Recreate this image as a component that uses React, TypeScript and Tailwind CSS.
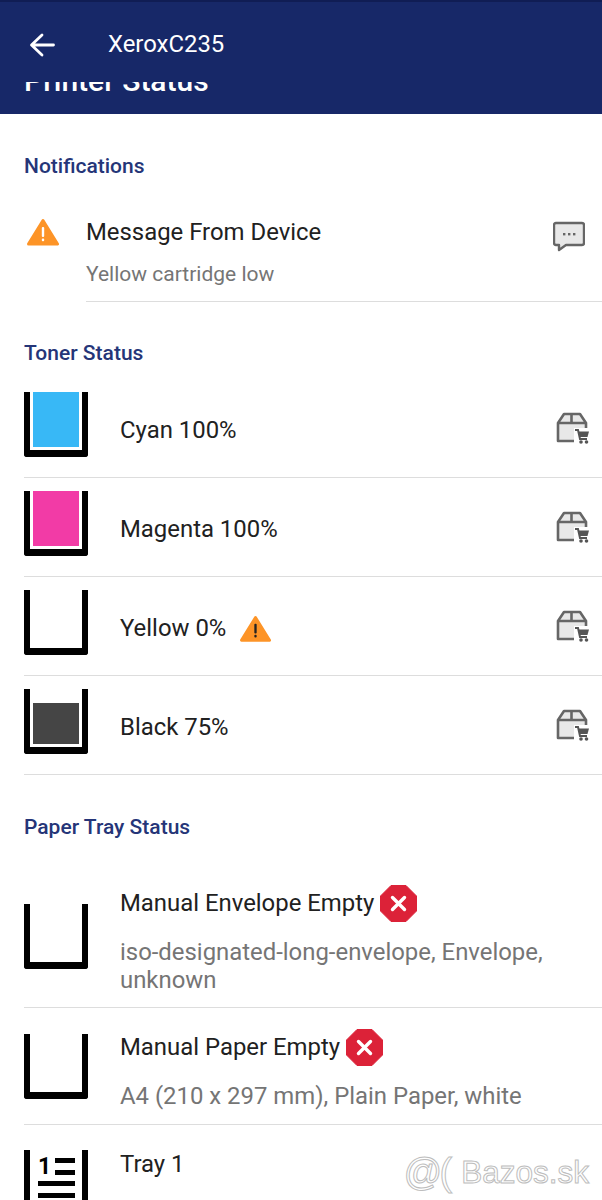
import React from 'react'

const font = { fontFamily: 'Roboto, sans-serif' }

function BackArrow() {
  return (
    <svg width="26" height="24" viewBox="0 0 26 24" className="shrink-0">
      <path d="M24.5 12 H3 M13 2 L2.5 12 L13 22" stroke="#fff" strokeWidth="2.8" fill="none" strokeLinecap="round" strokeLinejoin="round" />
    </svg>
  )
}

function WarnIcon({ size = 32, dark = false }: { size?: number; dark?: boolean }) {
  return (
    <svg width={size} height={size * 0.875} viewBox="0 0 32 28" className="shrink-0">
      <path d="M16 2.5 L30.5 26 H1.5 Z" fill="#fd9427" stroke="#fd9427" strokeWidth="3" strokeLinejoin="round" />
      <rect x="14.8" y="9" width="2.4" height="10" rx="1" fill={dark ? '#222' : '#fff'} />
      <rect x="14.8" y="20.5" width="2.4" height="2.8" rx="1" fill={dark ? '#222' : '#fff'} />
    </svg>
  )
}

function StopIcon() {
  return (
    <svg width="37" height="37" viewBox="0 0 37 37" className="shrink-0">
      <path d="M11 0.5 H26 L36.5 11 V26 L26 36.5 H11 L0.5 26 V11 Z" fill="#dc2238" stroke="#dc2238" strokeLinejoin="round" />
      <path d="M12.5 12.5 L24.5 24.5 M24.5 12.5 L12.5 24.5" stroke="#fff" strokeWidth="3.4" strokeLinecap="round" />
    </svg>
  )
}

function ChatIcon() {
  return (
    <svg width="32" height="32" viewBox="0 0 32 32">
      <path d="M3 2 H29 Q31 2 31 4 V22 Q31 24 29 24 H13 L6 29 V24 H3 Q1 24 1 22 V4 Q1 2 3 2 Z" fill="#e8e8e8" stroke="#666" strokeWidth="2.4" strokeLinejoin="round" />
      <rect x="10" y="12" width="2.4" height="2.4" fill="#666" />
      <rect x="15" y="12" width="2.4" height="2.4" fill="#666" />
      <rect x="20" y="12" width="2.4" height="2.4" fill="#666" />
    </svg>
  )
}

function BoxCartIcon() {
  return (
    <svg width="34" height="32" viewBox="0 0 34 32">
      <path d="M2 11 L8 2 H24 L30 11 V29 H2 Z" fill="#e8e8e8" stroke="#666" strokeWidth="2.6" strokeLinejoin="round" />
      <path d="M2 11 H30 M15.5 2 V11" stroke="#666" strokeWidth="2.6" fill="none" />
      <rect x="18" y="16" width="16" height="16" fill="#fff" />
      <path d="M19 18 H22 L24 27 H31" stroke="#555" strokeWidth="2" fill="none" />
      <path d="M22.5 19.5 H33 L31.5 25 H23.5 Z" fill="#555" />
      <circle cx="25" cy="30" r="1.8" fill="#555" />
      <circle cx="30.5" cy="30" r="1.8" fill="#555" />
    </svg>
  )
}

function Bin({ fill, inset }: { fill?: string; inset?: number }) {
  return (
    <div className="relative h-[65px] w-[64px] shrink-0 rounded-b-[3px] border-x-[6px] border-b-[7px] border-black">
      {fill && (
        <div
          className="absolute bottom-[3px] left-[3px] right-[3px]"
          style={{ backgroundColor: fill, top: inset ?? 0 }}
        />
      )}
    </div>
  )
}

function TrayIcon() {
  return (
    <div className="flex h-[50px] w-[64px] shrink-0 flex-col gap-[7px] overflow-hidden border-x-[6px] border-black pl-[8px] pr-[7px] pt-[8px]">
      <div className="flex items-start gap-[7px]">
        <span className="w-[10px] text-[23px] leading-[17px] font-bold text-black">1</span>
        <div className="flex flex-1 flex-col gap-[7px]">
          <div className="h-[5px] bg-black" />
          <div className="h-[5px] bg-black" />
        </div>
      </div>
      <div className="-mt-[1px] h-[5px] shrink-0 bg-black" />
      <div className="h-[5px] shrink-0 bg-black" />
    </div>
  )
}

function TonerRow({ label, fill, inset, warn, first }: { label: string; fill?: string; inset?: number; warn?: boolean; first?: boolean }) {
  return (
    <div className={first ? 'ml-6 flex h-[86px] items-start border-b border-[#dddddd]' : 'ml-6 flex h-[99px] items-start border-b border-[#dddddd] pt-[13px]'}>
      <Bin fill={fill} inset={inset} />
      <div className="ml-8 flex h-[77px] flex-1 items-center">
        <span className="text-[23.9px] text-[#212121]">{label}</span>
        {warn && <div className="ml-[14px]"><WarnIcon size={31} dark /></div>}
      </div>
      <div className="mr-[12px] mt-[20px]"><BoxCartIcon /></div>
    </div>
  )
}

export default function App() {
  return (
    <div className="relative h-[1200px] w-[602px] overflow-hidden bg-white" style={font}>
      <header className="h-[114px] overflow-hidden border-t-[2px] border-[#101d54] bg-[#172868]">
        <div className="flex h-[80px] items-center pl-[29px] pt-[6px]">
          <BackArrow />
          <span className="ml-[53px] text-[23.9px] text-white">XeroxC235</span>
        </div>
        <div className="h-[11px] overflow-hidden">
          <div className="-mt-[15px] pl-6 text-[30px] leading-[28px] font-medium text-white">Printer Status</div>
        </div>
      </header>

      <h2 className="ml-6 mt-[38px] text-[21px] leading-[28px] font-medium text-[#253578]">Notifications</h2>
      <div className="mt-[26px] flex pl-[27px]">
        <div className="mt-[12px]"><WarnIcon /></div>
        <div className="ml-[27px] flex h-[96px] flex-1 items-start justify-between border-b border-[#dddddd] pt-[11px]">
          <div>
            <div className="text-[23.9px] leading-[30px] text-[#212121]">Message From Device</div>
            <div className="mt-[14px] text-[21px] leading-[26px] text-[#757575]">Yellow cartridge low</div>
          </div>
          <div className="mr-[17px] mt-[4px]"><ChatIcon /></div>
        </div>
      </div>

      <h2 className="ml-6 mt-[37px] text-[21px] leading-[28px] font-medium text-[#253578]">Toner Status</h2>
      <div className="mt-[25px]">
        <TonerRow first label="Cyan 100%" fill="#38b8f6" />
        <TonerRow label="Magenta 100%" fill="#f23ba6" />
        <TonerRow label="Yellow 0%" warn />
        <TonerRow label="Black 75%" fill="#454545" inset={14} />
      </div>

      <h2 className="ml-6 mt-[38px] text-[21px] leading-[28px] font-medium text-[#253578]">Paper Tray Status</h2>
      <div className="ml-6 mt-[44px] flex h-[123px] items-start border-b border-[#dddddd]">
        <div className="mt-[19px]"><Bin /></div>
        <div className="ml-8 flex-1">
          <div className="flex items-center">
            <span className="text-[23.9px] leading-[37px] text-[#212121]">Manual Envelope Empty</span>
            <div className="ml-[6px]"><StopIcon /></div>
          </div>
          <div className="mt-[16px] text-[23.9px] leading-[28px] text-[#757575]">iso-designated-long-envelope, Envelope, unknown</div>
        </div>
      </div>
      <div className="ml-6 flex h-[117px] items-start border-b border-[#dddddd]">
        <div className="mt-[26px]"><Bin /></div>
        <div className="ml-8 flex-1">
          <div className="mt-[21px] flex items-center">
            <span className="text-[23.9px] leading-[37px] text-[#212121]">Manual Paper Empty</span>
            <div className="ml-[6px]"><StopIcon /></div>
          </div>
          <div className="mt-[16px] text-[23.9px] leading-[28px] text-[#757575]">A4 (210 x 297 mm), Plain Paper, white</div>
        </div>
      </div>
      <div className="ml-6 flex items-start">
        <div className="mt-[25px]"><TrayIcon /></div>
        <div className="ml-8 mt-[21px]">
          <div className="text-[23.9px] leading-[37px] text-[#212121]">Tray 1</div>
          <div className="mt-[16px] text-[23.9px] leading-[28px] text-[#757575]">A4 (210 x 297 mm), Plain Paper, white</div>
        </div>
      </div>

      <div className="absolute left-[403px] top-[1150px] flex items-center text-[38px] leading-[44px] text-white" style={{ WebkitTextStroke: '1px #bdbdbd', fontFamily: 'Liberation Sans, sans-serif' }}>
        <span className="italic">@</span>
        <span className="-ml-[2px] font-light">(</span>
        <span className="ml-[9px] text-[31.5px]">Bazos.sk</span>
      </div>
    </div>
  )
}
